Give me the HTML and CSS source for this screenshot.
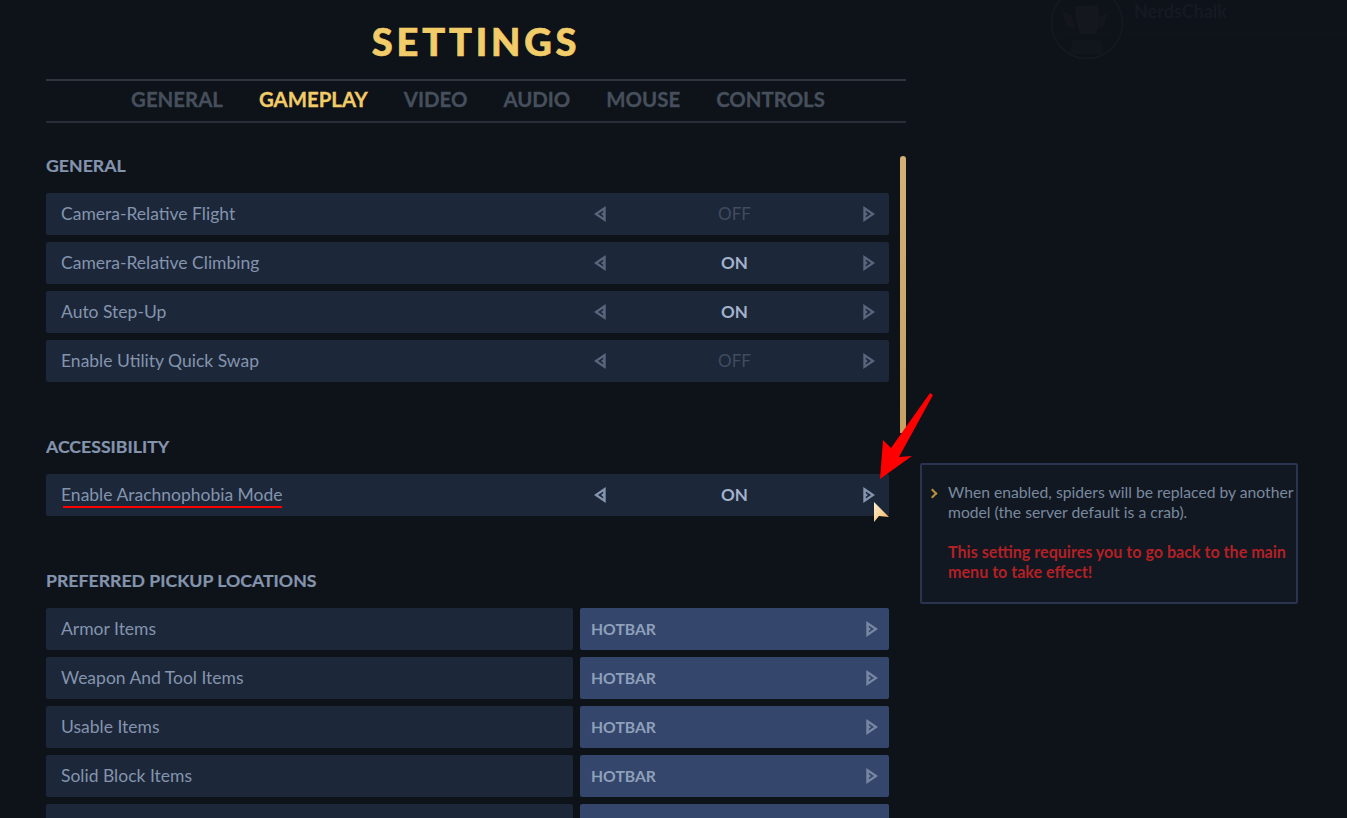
FILE: index.html
```html
<!DOCTYPE html>
<html lang="en">
<head>
    <meta charset="UTF-8">
    <title>Settings</title>
    <link rel="stylesheet" href="styles.css">
</head>
<body>
    <svg width="0" height="0" class="defs">
        <symbol id="arrow-right" viewBox="0 0 12 16">
            <path fill-rule="evenodd" fill="currentColor" d="M0.3 0 L12 8 L0.3 16 Z M2.8 4.4 L8 8 L2.8 11.6 L2.8 9.8 L5 8 L2.8 6.2 Z"/>
        </symbol>
        <symbol id="arrow-left" viewBox="0 0 12 16">
            <path fill-rule="evenodd" fill="currentColor" d="M11.7 0 L0 8 L11.7 16 Z M9.2 4.4 L4 8 L9.2 11.6 L9.2 9.8 L7 8 L9.2 6.2 Z"/>
        </symbol>
        <linearGradient id="cursor-fill" x1="0" y1="0" x2="1" y2="1">
            <stop offset="0" stop-color="#fff3d6"/>
            <stop offset="1" stop-color="#f4b25c"/>
        </linearGradient>
    </svg>

    <div class="watermark">
        <svg class="watermark-logo" width="74" height="74" viewBox="0 0 74 74">
            <circle cx="37" cy="37" r="35.5" fill="none" stroke="#151a20" stroke-width="1.5"/>
            <path d="M25 20 L48 19 L50 34 L46 48 L30 48 L26 36 Z" fill="#14181e"/>
            <path d="M22 30 L12 24 L16 40 L26 44 Z M51 30 L58 27 L54 40 L47 44 Z" fill="#13171d"/>
            <path d="M22 54 L50 54 L54 68 L20 68 Z" fill="#11161d"/>
        </svg>
        <div class="watermark-name">NerdsChalk</div>
    </div>

    <div class="page">
        <div class="settings">
            <h1 class="title">SETTINGS</h1>
            <div class="tabs">
                <div class="tab">GENERAL</div>
                <div class="tab active">GAMEPLAY</div>
                <div class="tab">VIDEO</div>
                <div class="tab">AUDIO</div>
                <div class="tab">MOUSE</div>
                <div class="tab">CONTROLS</div>
            </div>
            <div class="panel">
                <div class="list">
                    <h2 class="section-title">GENERAL</h2>
                    <div class="rows">
                        <div class="row">
                            <div class="row-label">Camera-Relative Flight</div>
                            <div class="toggle">
                                <svg class="arrow"><use href="#arrow-left"/></svg>
                                <span class="toggle-value off">OFF</span>
                                <svg class="arrow"><use href="#arrow-right"/></svg>
                            </div>
                        </div>
                        <div class="row">
                            <div class="row-label">Camera-Relative Climbing</div>
                            <div class="toggle">
                                <svg class="arrow"><use href="#arrow-left"/></svg>
                                <span class="toggle-value">ON</span>
                                <svg class="arrow"><use href="#arrow-right"/></svg>
                            </div>
                        </div>
                        <div class="row">
                            <div class="row-label">Auto Step-Up</div>
                            <div class="toggle">
                                <svg class="arrow"><use href="#arrow-left"/></svg>
                                <span class="toggle-value">ON</span>
                                <svg class="arrow"><use href="#arrow-right"/></svg>
                            </div>
                        </div>
                        <div class="row">
                            <div class="row-label">Enable Utility Quick Swap</div>
                            <div class="toggle">
                                <svg class="arrow"><use href="#arrow-left"/></svg>
                                <span class="toggle-value off">OFF</span>
                                <svg class="arrow"><use href="#arrow-right"/></svg>
                            </div>
                        </div>
                    </div>

                    <h2 class="section-title">ACCESSIBILITY</h2>
                    <div class="rows">
                        <div class="row hover">
                            <div class="row-label">
                                <span class="underlined">Enable Arachnophobia Mode</span>
                            </div>
                            <div class="toggle">
                                <svg class="arrow"><use href="#arrow-left"/></svg>
                                <span class="toggle-value">ON</span>
                                <svg class="arrow"><use href="#arrow-right"/></svg>
                            </div>
                        </div>
                    </div>

                    <h2 class="section-title">PREFERRED PICKUP LOCATIONS</h2>
                    <div class="rows">
                        <div class="row split">
                            <div class="row-label">Armor Items</div>
                            <div class="select"><span>HOTBAR</span><svg class="arrow"><use href="#arrow-right"/></svg></div>
                        </div>
                        <div class="row split">
                            <div class="row-label">Weapon And Tool Items</div>
                            <div class="select"><span>HOTBAR</span><svg class="arrow"><use href="#arrow-right"/></svg></div>
                        </div>
                        <div class="row split">
                            <div class="row-label">Usable Items</div>
                            <div class="select"><span>HOTBAR</span><svg class="arrow"><use href="#arrow-right"/></svg></div>
                        </div>
                        <div class="row split">
                            <div class="row-label">Solid Block Items</div>
                            <div class="select"><span>HOTBAR</span><svg class="arrow"><use href="#arrow-right"/></svg></div>
                        </div>
                        <div class="row split">
                            <div class="row-label"></div>
                            <div class="select"></div>
                        </div>
                    </div>
                </div>
                <div class="scrollbar"></div>
            </div>
        </div>

        <div class="tooltip">
            <p>When enabled, spiders will be replaced by another model (the server default is a crab).</p>
            <p class="warning">This setting requires you to go back to the main menu to take effect!</p>
        </div>
    </div>

    <!-- annotations on top of the screenshot -->
    <svg class="annotation" width="1347" height="818">
        <path d="M930 393 L933 395 L899 457 L912 456 L880 479 L883 440 L891 448 Z" fill="#fe0000"/>
        <path d="M874 502 L889 517 L879 516 L874 522 Z" fill="url(#cursor-fill)"/>
    </svg>
</body>
</html>
```

FILE: styles.css
```css
html, body {
    height: 100%;
}
body {
    margin: 0;
    height: 818px;
    overflow: hidden;
    background-color: #0e1219;
    font-family: 'Lato', 'Noto Sans', sans-serif;
    position: relative;
}
.defs {
    position: absolute;
}
.page {
    display: flex;
    align-items: flex-start;
    padding-left: 46px;
}
.settings {
    width: 860px;
    flex: none;
}
.title {
    margin: 0;
    height: 79px;
    line-height: 83px;
    text-align: center;
    font-size: 38px;
    font-weight: 900;
    letter-spacing: 3.8px;
    -webkit-text-stroke: 0.7px #f1cc69;
    color: #f1cc69;
}
.tabs {
    display: flex;
    justify-content: center;
    gap: 36px;
    height: 40px;
    padding-left: 4px;
    border-top: 2px solid #30353f;
    border-bottom: 2px solid #2a2e38;
    line-height: 37px;
    font-size: 20.4px;
    font-weight: 700;
    -webkit-text-stroke: 0.3px currentColor;
    color: #464f5c;
}
.tab.active {
    color: #f1cc69;
}
.panel {
    display: flex;
    justify-content: space-between;
    height: 695px;
    overflow: hidden;
}
.list {
    width: 843px;
}
.section-title {
    margin: 0 0 16px;
    padding-top: 32px;
    height: 22px;
    line-height: 22px;
    font-size: 17.7px;
    font-weight: 700;
    -webkit-text-stroke: 0.2px currentColor;
    color: #8494ad;
}
.rows + .section-title {
    margin-top: 21px;
    padding-top: 33px;
}
.rows {
    display: flex;
    flex-direction: column;
    gap: 7px;
}
.row {
    display: flex;
    height: 42px;
    flex: none;
    background-color: #1c273a;
    border-radius: 2px;
    font-size: 17.5px;
    color: #8494ad;
}
.row-label {
    flex: 1;
    padding-left: 15px;
    line-height: 41px;
}
.underlined {
    display: inline-block;
    position: relative;
}
.underlined::after {
    content: "";
    position: absolute;
    left: 2px;
    right: 1px;
    bottom: 7px;
    height: 2px;
    background-color: #fe0000;
}
.toggle {
    width: 309px;
    display: flex;
    align-items: center;
    justify-content: space-between;
    padding: 0 14px;
    box-sizing: border-box;
}
.arrow {
    width: 12px;
    height: 16px;
    color: #58657c;
}
.hover .arrow {
    color: #8494ad;
}
.toggle-value {
    margin-bottom: 2px;
    font-size: 17px;
    font-weight: 700;
    color: #a3b3cb;
}
.toggle-value.off {
    font-weight: 400;
    color: #404c60;
}
.split {
    background-color: transparent;
    gap: 7px;
}
.split .row-label {
    background-color: #1c273a;
    border-radius: 2px;
}
.select {
    width: 309px;
    flex: none;
    display: flex;
    align-items: center;
    justify-content: space-between;
    padding: 0 11px;
    box-sizing: border-box;
    background-color: #34466b;
    border-radius: 2px;
    font-size: 15.7px;
    font-weight: 700;
    color: #8fa0bb;
}
.select .arrow {
    color: #7787a3;
}
.scrollbar {
    width: 6px;
    height: 277px;
    margin-top: 33px;
    border-radius: 3px 3px 0 0;
    background: linear-gradient(#d4b077, #c6a164);
}
.tooltip {
    margin-top: 463px;
    margin-left: 14px;
    width: 378px;
    height: 141px;
    box-sizing: border-box;
    flex: none;
    border: 2px solid #2a3350;
    border-radius: 2px;
    background-color: #111821;
    padding: 17px 0 0 26px;
    position: relative;
    font-size: 15.7px;
    line-height: 20px;
    color: #7a899f;
}
.tooltip::before {
    content: "";
    position: absolute;
    left: 7px;
    top: 25px;
    width: 5px;
    height: 5px;
    border-top: 2.5px solid #b8913a;
    border-right: 2.5px solid #b8913a;
    transform: rotate(45deg);
}
.tooltip p {
    margin: 0 0 20px 0;
}
.tooltip .warning {
    font-size: 16.1px;
    font-weight: 700;
    color: #b32025;
}
.watermark {
    position: absolute;
    left: 1050px;
    top: 0;
    right: 0;
    height: 33px;
    display: flex;
    gap: 10px;
    border-bottom: 1px solid #10151c;
    color: #151a22;
    font-weight: 700;
    font-size: 18px;
}
.watermark-logo {
    margin-top: -14px;
    flex: none;
}
.watermark-name {
    line-height: 22px;
}
.annotation {
    position: absolute;
    left: 0;
    top: 0;
    pointer-events: none;
}
```
